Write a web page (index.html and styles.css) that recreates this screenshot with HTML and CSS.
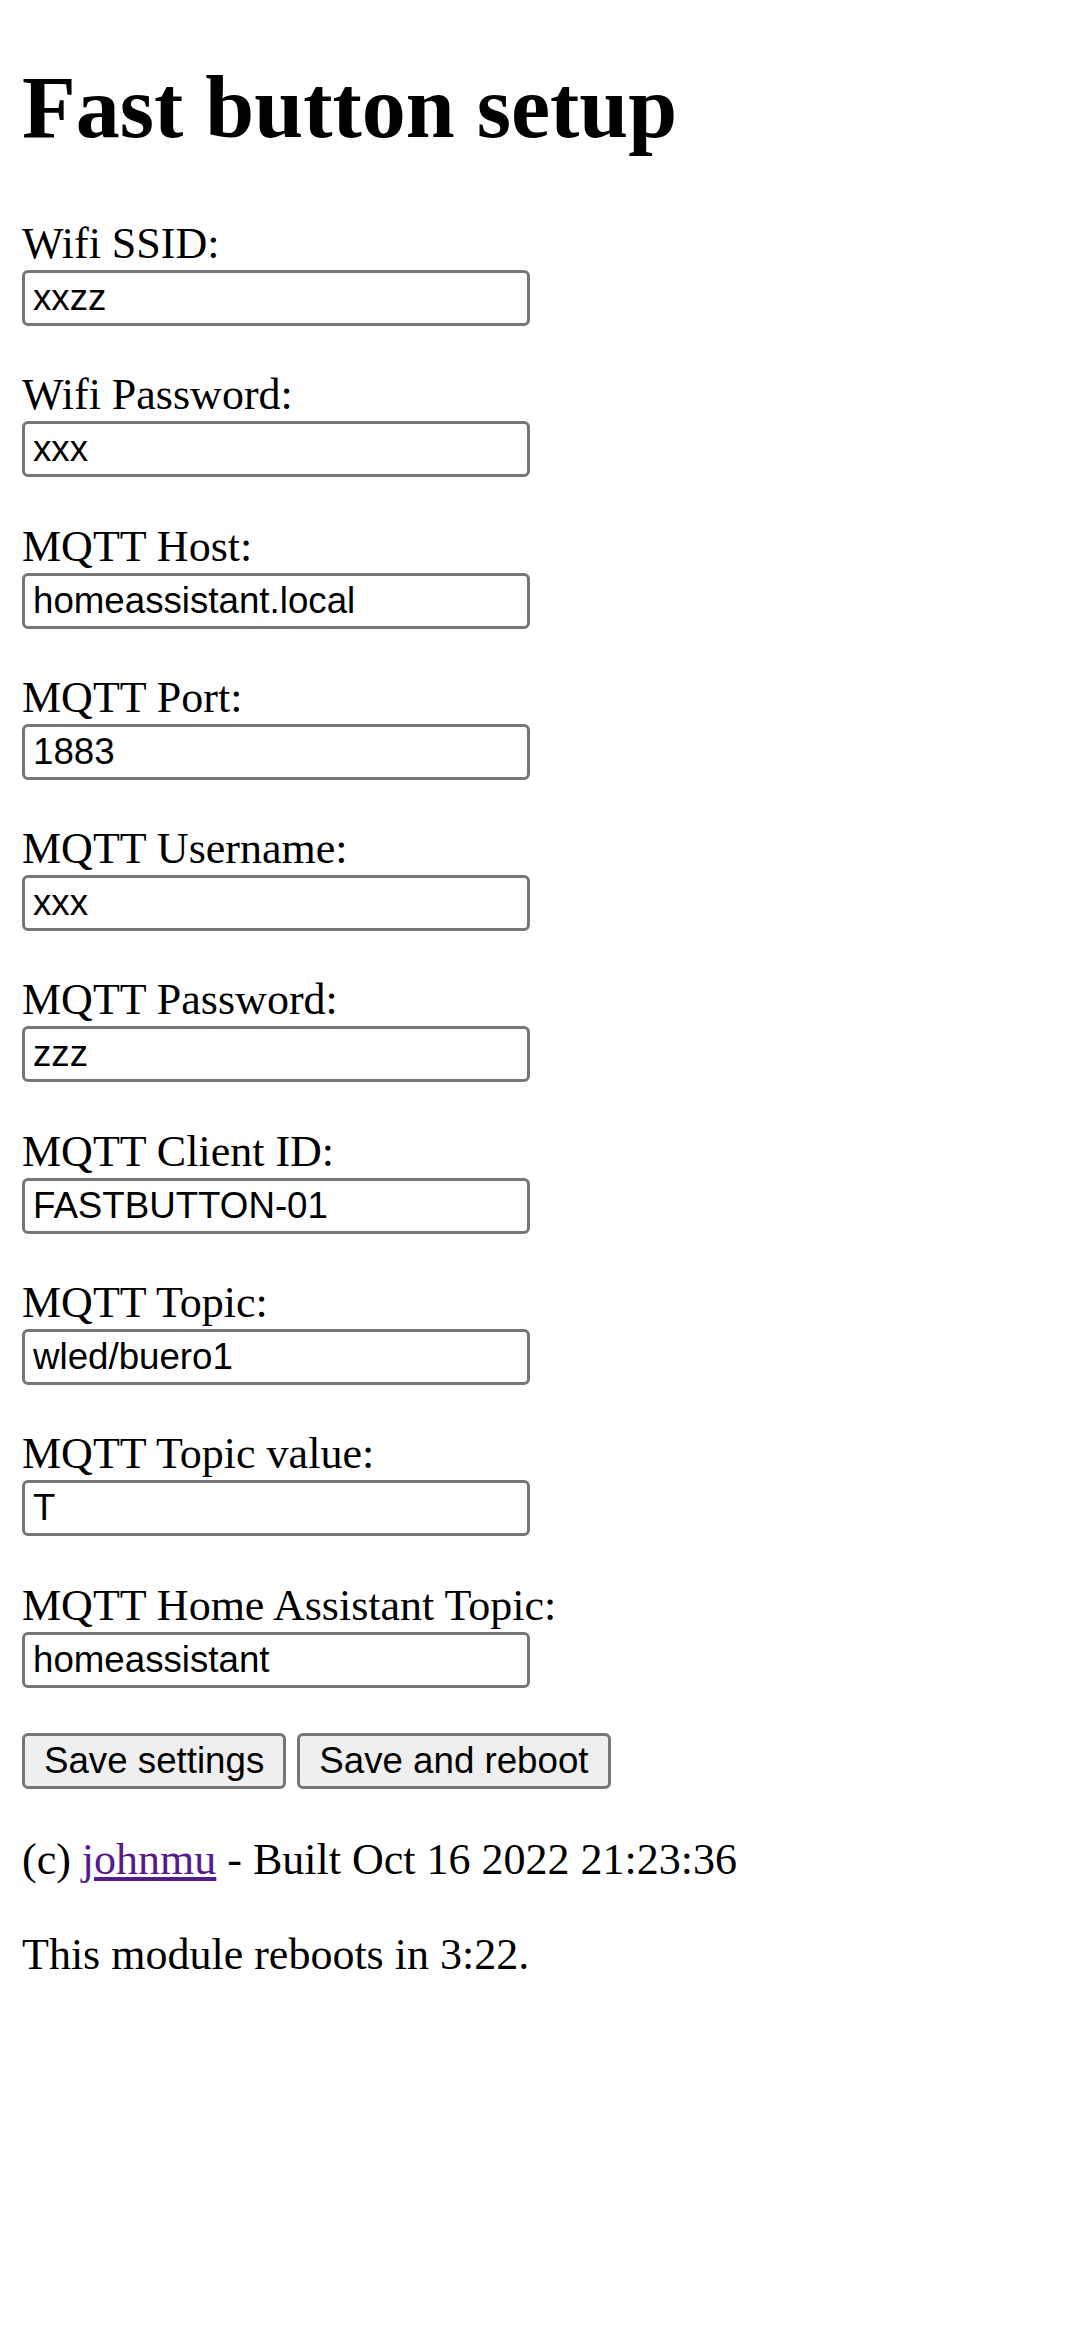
FILE: index.html
```html
<!DOCTYPE html>
<html>
<head>
<meta charset="utf-8">
<title>Fast button setup</title>
<link rel="stylesheet" href="styles.css">
</head>
<body>
<h1 class="title">Fast button setup</h1>
<form class="setup">
  <div class="row"><label class="lbl">Wifi SSID:</label><input class="field" type="text" value="xxzz"></div>
  <div class="row"><label class="lbl">Wifi Password:</label><input class="field" type="text" value="xxx"></div>
  <div class="row"><label class="lbl">MQTT Host:</label><input class="field" type="text" value="homeassistant.local"></div>
  <div class="row"><label class="lbl">MQTT Port:</label><input class="field" type="text" value="1883"></div>
  <div class="row"><label class="lbl">MQTT Username:</label><input class="field" type="text" value="xxx"></div>
  <div class="row"><label class="lbl">MQTT Password:</label><input class="field" type="text" value="zzz"></div>
  <div class="row"><label class="lbl">MQTT Client ID:</label><input class="field" type="text" value="FASTBUTTON-01"></div>
  <div class="row"><label class="lbl">MQTT Topic:</label><input class="field" type="text" value="wled/buero1"></div>
  <div class="row"><label class="lbl">MQTT Topic value:</label><input class="field" type="text" value="T"></div>
  <div class="row"><label class="lbl">MQTT Home Assistant Topic:</label><input class="field" type="text" value="homeassistant"></div>
  <div class="actions"><input class="btn" type="submit" value="Save settings"><input class="btn" type="submit" value="Save and reboot"></div>
</form>
<p class="note">(c) <a class="link" href="#">johnmu</a> - Built Oct 16 2022 21:23:36</p>
<p class="note">This module reboots in 3:22.</p>
</body>
</html>
```

FILE: styles.css
```css
html {
  background: #ffffff;
}
body {
  margin: 22px;
  font-family: "Liberation Serif", "Times New Roman", serif;
  font-size: 44px;
  line-height: 49px;
  color: #000000;
}
.title {
  font-size: 88px;
  line-height: 97px;
  font-weight: bold;
  margin: 37px 0 63px;
}
.setup {
  margin: 0;
}
.row {
  display: flex;
  flex-direction: column;
  align-items: flex-start;
  gap: 2px;
  margin-bottom: 44.3px;
}
.lbl {
  display: block;
}
.field {
  box-sizing: border-box;
  width: 508px;
  height: 56px;
  margin: 0;
  padding: 2px 8px;
  font-family: "Liberation Sans", Arial, sans-serif;
  font-size: 36.7px;
  color: #000000;
  background: #ffffff;
  border: 3px solid #767676;
  border-radius: 6px;
}
.actions {
  display: flex;
  gap: 11px;
  padding-top: 1px;
}
.btn {
  box-sizing: border-box;
  height: 56px;
  margin: 0;
  padding: 2px 19px;
  font-family: "Liberation Sans", Arial, sans-serif;
  font-size: 36.7px;
  color: #000000;
  background: #efefef;
  border: 3px solid #767676;
  border-radius: 6px;
}
.note {
  margin: 46px 0;
}
.link {
  color: #551a8b;
}
```
